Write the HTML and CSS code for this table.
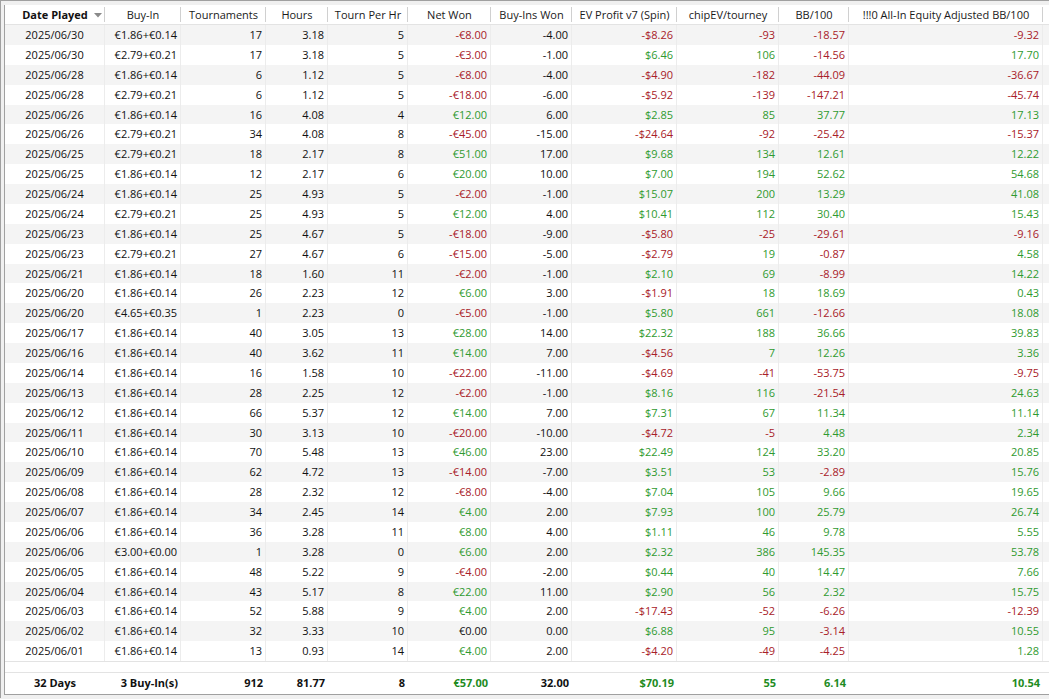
FILE: index.html
```html
<!DOCTYPE html>
<html>
<head>
<meta charset="utf-8">
<link rel="stylesheet" href="styles.css">
</head>
<body>
<div class="frame">
<div class="panel">
<div class="row head">
<div class="hc sorted"><b>Date Played</b><svg class="arrow" width="8" height="5" viewBox="0 0 8 5"><path d="M0 0 H8 L4 4.5 Z" fill="#8a8a8a"/></svg></div>
<div class="hc">Buy-In</div>
<div class="hc">Tournaments</div>
<div class="hc">Hours</div>
<div class="hc">Tourn Per Hr</div>
<div class="hc">Net Won</div>
<div class="hc">Buy-Ins Won</div>
<div class="hc">EV Profit v7 (Spin)</div>
<div class="hc">chipEV/tourney</div>
<div class="hc">BB/100</div>
<div class="hc">!!!0 All-In Equity Adjusted BB/100</div>
<div class="hc fill"></div>
</div>
<div class="body">
<div class="row"><div class="c">2025/06/30</div><div>€1.86+€0.14</div><div>17</div><div>3.18</div><div>5</div><div class="r">-€8.00</div><div>-4.00</div><div class="r">-$8.26</div><div class="r">-93</div><div class="r">-18.57</div><div class="r">-9.32</div><div class="fill"></div></div>
<div class="row"><div class="c">2025/06/30</div><div>€2.79+€0.21</div><div>17</div><div>3.18</div><div>5</div><div class="r">-€3.00</div><div>-1.00</div><div class="g">$6.46</div><div class="g">106</div><div class="r">-14.56</div><div class="g">17.70</div><div class="fill"></div></div>
<div class="row"><div class="c">2025/06/28</div><div>€1.86+€0.14</div><div>6</div><div>1.12</div><div>5</div><div class="r">-€8.00</div><div>-4.00</div><div class="r">-$4.90</div><div class="r">-182</div><div class="r">-44.09</div><div class="r">-36.67</div><div class="fill"></div></div>
<div class="row"><div class="c">2025/06/28</div><div>€2.79+€0.21</div><div>6</div><div>1.12</div><div>5</div><div class="r">-€18.00</div><div>-6.00</div><div class="r">-$5.92</div><div class="r">-139</div><div class="r">-147.21</div><div class="r">-45.74</div><div class="fill"></div></div>
<div class="row"><div class="c">2025/06/26</div><div>€1.86+€0.14</div><div>16</div><div>4.08</div><div>4</div><div class="g">€12.00</div><div>6.00</div><div class="g">$2.85</div><div class="g">85</div><div class="g">37.77</div><div class="g">17.13</div><div class="fill"></div></div>
<div class="row"><div class="c">2025/06/26</div><div>€2.79+€0.21</div><div>34</div><div>4.08</div><div>8</div><div class="r">-€45.00</div><div>-15.00</div><div class="r">-$24.64</div><div class="r">-92</div><div class="r">-25.42</div><div class="r">-15.37</div><div class="fill"></div></div>
<div class="row"><div class="c">2025/06/25</div><div>€2.79+€0.21</div><div>18</div><div>2.17</div><div>8</div><div class="g">€51.00</div><div>17.00</div><div class="g">$9.68</div><div class="g">134</div><div class="g">12.61</div><div class="g">12.22</div><div class="fill"></div></div>
<div class="row"><div class="c">2025/06/25</div><div>€1.86+€0.14</div><div>12</div><div>2.17</div><div>6</div><div class="g">€20.00</div><div>10.00</div><div class="g">$7.00</div><div class="g">194</div><div class="g">52.62</div><div class="g">54.68</div><div class="fill"></div></div>
<div class="row"><div class="c">2025/06/24</div><div>€1.86+€0.14</div><div>25</div><div>4.93</div><div>5</div><div class="r">-€2.00</div><div>-1.00</div><div class="g">$15.07</div><div class="g">200</div><div class="g">13.29</div><div class="g">41.08</div><div class="fill"></div></div>
<div class="row"><div class="c">2025/06/24</div><div>€2.79+€0.21</div><div>25</div><div>4.93</div><div>5</div><div class="g">€12.00</div><div>4.00</div><div class="g">$10.41</div><div class="g">112</div><div class="g">30.40</div><div class="g">15.43</div><div class="fill"></div></div>
<div class="row"><div class="c">2025/06/23</div><div>€1.86+€0.14</div><div>25</div><div>4.67</div><div>5</div><div class="r">-€18.00</div><div>-9.00</div><div class="r">-$5.80</div><div class="r">-25</div><div class="r">-29.61</div><div class="r">-9.16</div><div class="fill"></div></div>
<div class="row"><div class="c">2025/06/23</div><div>€2.79+€0.21</div><div>27</div><div>4.67</div><div>6</div><div class="r">-€15.00</div><div>-5.00</div><div class="r">-$2.79</div><div class="g">19</div><div class="r">-0.87</div><div class="g">4.58</div><div class="fill"></div></div>
<div class="row"><div class="c">2025/06/21</div><div>€1.86+€0.14</div><div>18</div><div>1.60</div><div>11</div><div class="r">-€2.00</div><div>-1.00</div><div class="g">$2.10</div><div class="g">69</div><div class="r">-8.99</div><div class="g">14.22</div><div class="fill"></div></div>
<div class="row"><div class="c">2025/06/20</div><div>€1.86+€0.14</div><div>26</div><div>2.23</div><div>12</div><div class="g">€6.00</div><div>3.00</div><div class="r">-$1.91</div><div class="g">18</div><div class="g">18.69</div><div class="g">0.43</div><div class="fill"></div></div>
<div class="row"><div class="c">2025/06/20</div><div>€4.65+€0.35</div><div>1</div><div>2.23</div><div>0</div><div class="r">-€5.00</div><div>-1.00</div><div class="g">$5.80</div><div class="g">661</div><div class="r">-12.66</div><div class="g">18.08</div><div class="fill"></div></div>
<div class="row"><div class="c">2025/06/17</div><div>€1.86+€0.14</div><div>40</div><div>3.05</div><div>13</div><div class="g">€28.00</div><div>14.00</div><div class="g">$22.32</div><div class="g">188</div><div class="g">36.66</div><div class="g">39.83</div><div class="fill"></div></div>
<div class="row"><div class="c">2025/06/16</div><div>€1.86+€0.14</div><div>40</div><div>3.62</div><div>11</div><div class="g">€14.00</div><div>7.00</div><div class="r">-$4.56</div><div class="g">7</div><div class="g">12.26</div><div class="g">3.36</div><div class="fill"></div></div>
<div class="row"><div class="c">2025/06/14</div><div>€1.86+€0.14</div><div>16</div><div>1.58</div><div>10</div><div class="r">-€22.00</div><div>-11.00</div><div class="r">-$4.69</div><div class="r">-41</div><div class="r">-53.75</div><div class="r">-9.75</div><div class="fill"></div></div>
<div class="row"><div class="c">2025/06/13</div><div>€1.86+€0.14</div><div>28</div><div>2.25</div><div>12</div><div class="r">-€2.00</div><div>-1.00</div><div class="g">$8.16</div><div class="g">116</div><div class="r">-21.54</div><div class="g">24.63</div><div class="fill"></div></div>
<div class="row"><div class="c">2025/06/12</div><div>€1.86+€0.14</div><div>66</div><div>5.37</div><div>12</div><div class="g">€14.00</div><div>7.00</div><div class="g">$7.31</div><div class="g">67</div><div class="g">11.34</div><div class="g">11.14</div><div class="fill"></div></div>
<div class="row"><div class="c">2025/06/11</div><div>€1.86+€0.14</div><div>30</div><div>3.13</div><div>10</div><div class="r">-€20.00</div><div>-10.00</div><div class="r">-$4.72</div><div class="r">-5</div><div class="g">4.48</div><div class="g">2.34</div><div class="fill"></div></div>
<div class="row"><div class="c">2025/06/10</div><div>€1.86+€0.14</div><div>70</div><div>5.48</div><div>13</div><div class="g">€46.00</div><div>23.00</div><div class="g">$22.49</div><div class="g">124</div><div class="g">33.20</div><div class="g">20.85</div><div class="fill"></div></div>
<div class="row"><div class="c">2025/06/09</div><div>€1.86+€0.14</div><div>62</div><div>4.72</div><div>13</div><div class="r">-€14.00</div><div>-7.00</div><div class="g">$3.51</div><div class="g">53</div><div class="r">-2.89</div><div class="g">15.76</div><div class="fill"></div></div>
<div class="row"><div class="c">2025/06/08</div><div>€1.86+€0.14</div><div>28</div><div>2.32</div><div>12</div><div class="r">-€8.00</div><div>-4.00</div><div class="g">$7.04</div><div class="g">105</div><div class="g">9.66</div><div class="g">19.65</div><div class="fill"></div></div>
<div class="row"><div class="c">2025/06/07</div><div>€1.86+€0.14</div><div>34</div><div>2.45</div><div>14</div><div class="g">€4.00</div><div>2.00</div><div class="g">$7.93</div><div class="g">100</div><div class="g">25.79</div><div class="g">26.74</div><div class="fill"></div></div>
<div class="row"><div class="c">2025/06/06</div><div>€1.86+€0.14</div><div>36</div><div>3.28</div><div>11</div><div class="g">€8.00</div><div>4.00</div><div class="g">$1.11</div><div class="g">46</div><div class="g">9.78</div><div class="g">5.55</div><div class="fill"></div></div>
<div class="row"><div class="c">2025/06/06</div><div>€3.00+€0.00</div><div>1</div><div>3.28</div><div>0</div><div class="g">€6.00</div><div>2.00</div><div class="g">$2.32</div><div class="g">386</div><div class="g">145.35</div><div class="g">53.78</div><div class="fill"></div></div>
<div class="row"><div class="c">2025/06/05</div><div>€1.86+€0.14</div><div>48</div><div>5.22</div><div>9</div><div class="r">-€4.00</div><div>-2.00</div><div class="g">$0.44</div><div class="g">40</div><div class="g">14.47</div><div class="g">7.66</div><div class="fill"></div></div>
<div class="row"><div class="c">2025/06/04</div><div>€1.86+€0.14</div><div>43</div><div>5.17</div><div>8</div><div class="g">€22.00</div><div>11.00</div><div class="g">$2.90</div><div class="g">56</div><div class="g">2.32</div><div class="g">15.75</div><div class="fill"></div></div>
<div class="row"><div class="c">2025/06/03</div><div>€1.86+€0.14</div><div>52</div><div>5.88</div><div>9</div><div class="g">€4.00</div><div>2.00</div><div class="r">-$17.43</div><div class="r">-52</div><div class="r">-6.26</div><div class="r">-12.39</div><div class="fill"></div></div>
<div class="row"><div class="c">2025/06/02</div><div>€1.86+€0.14</div><div>32</div><div>3.33</div><div>10</div><div>€0.00</div><div>0.00</div><div class="g">$6.88</div><div class="g">95</div><div class="r">-3.14</div><div class="g">10.55</div><div class="fill"></div></div>
<div class="row"><div class="c">2025/06/01</div><div>€1.86+€0.14</div><div>13</div><div>0.93</div><div>14</div><div class="g">€4.00</div><div>2.00</div><div class="r">-$4.20</div><div class="r">-49</div><div class="r">-4.25</div><div class="g">1.28</div><div class="fill"></div></div>
</div>
<div class="spacer"></div>
<div class="row total"><div class="c">32 Days</div><div>3 Buy-In(s)</div><div>912</div><div>81.77</div><div>8</div><div class="tg">€57.00</div><div>32.00</div><div class="tg">$70.19</div><div class="tg">55</div><div class="tg">6.14</div><div class="tg">10.54</div><div class="fill"></div></div>
</div>
</div>
</body>
</html>
```
FILE: styles.css
```css
html, body {
  margin: 0;
  padding: 0;
}
body {
  background: #f0f0f0;
  font-family: "Open Sans", "Liberation Sans", sans-serif;
  font-size: 11px;
  color: #111;
  width: 1049px;
  height: 699px;
  overflow: hidden;
}
.frame {
  border-top: 1px solid #a0a0a0;
  border-left: 1px solid #a0a0a0;
  padding: 4px 0 0 3px;
  height: 698px;
  box-sizing: border-box;
}
.panel {
  background: #fff;
  border-left: 1px solid #a0a0a0;
  border-bottom: 1px solid #a0a0a0;
}
.row {
  display: grid;
  grid-template-columns: 100px 76px 85px 62px 80px 83px 81px 105px 102px 70px 194px 1fr;
  height: 20px;
  line-height: 20px;
}
.body .row {
  height: 19.875px;
  line-height: 19.875px;
}
.row > div {
  box-sizing: border-box;
  text-align: right;
  padding-right: 3px;
  white-space: nowrap;
  overflow: hidden;
  border-right: 1px solid #ececec;
}
.row > div.c {
  text-align: center;
  padding-right: 0;
}
.row > div.fill {
  border-right: none;
}
.body .row:nth-child(odd) {
  background: #f4f4f4;
}
.head {
  height: 19px;
  line-height: 19px;
  border-bottom: 1px solid #e3e3e3;
  color: #1a1a1a;
  background: #fff;
}
.head > .hc {
  text-align: center;
  padding-right: 0;
  border-right: none;
  background: linear-gradient(#d0d0d0, #d0d0d0) right center / 1px 15px no-repeat;
}
.head > .hc.fill {
  background: none;
}
.head > .sorted {
  display: flex;
  align-items: center;
  justify-content: center;
  padding-left: 14px;
}
.head b {
  font-weight: 700;
  color: #111;
}
.arrow {
  margin-left: 6px;
  margin-top: 2px;
}
.spacer {
  height: 11px;
  border-top: 1px solid #e3e3e3;
  box-sizing: border-box;
}
.total {
  border-top: 1px solid #e3e3e3;
  height: 21px;
  line-height: 20px;
  font-weight: 700;
  color: #111;
}
.total > div {
  border-right: none;
}
.r { color: #a82028; }
.g { color: #2f9a2f; }
.tg { color: #1f8c1f; }
```
